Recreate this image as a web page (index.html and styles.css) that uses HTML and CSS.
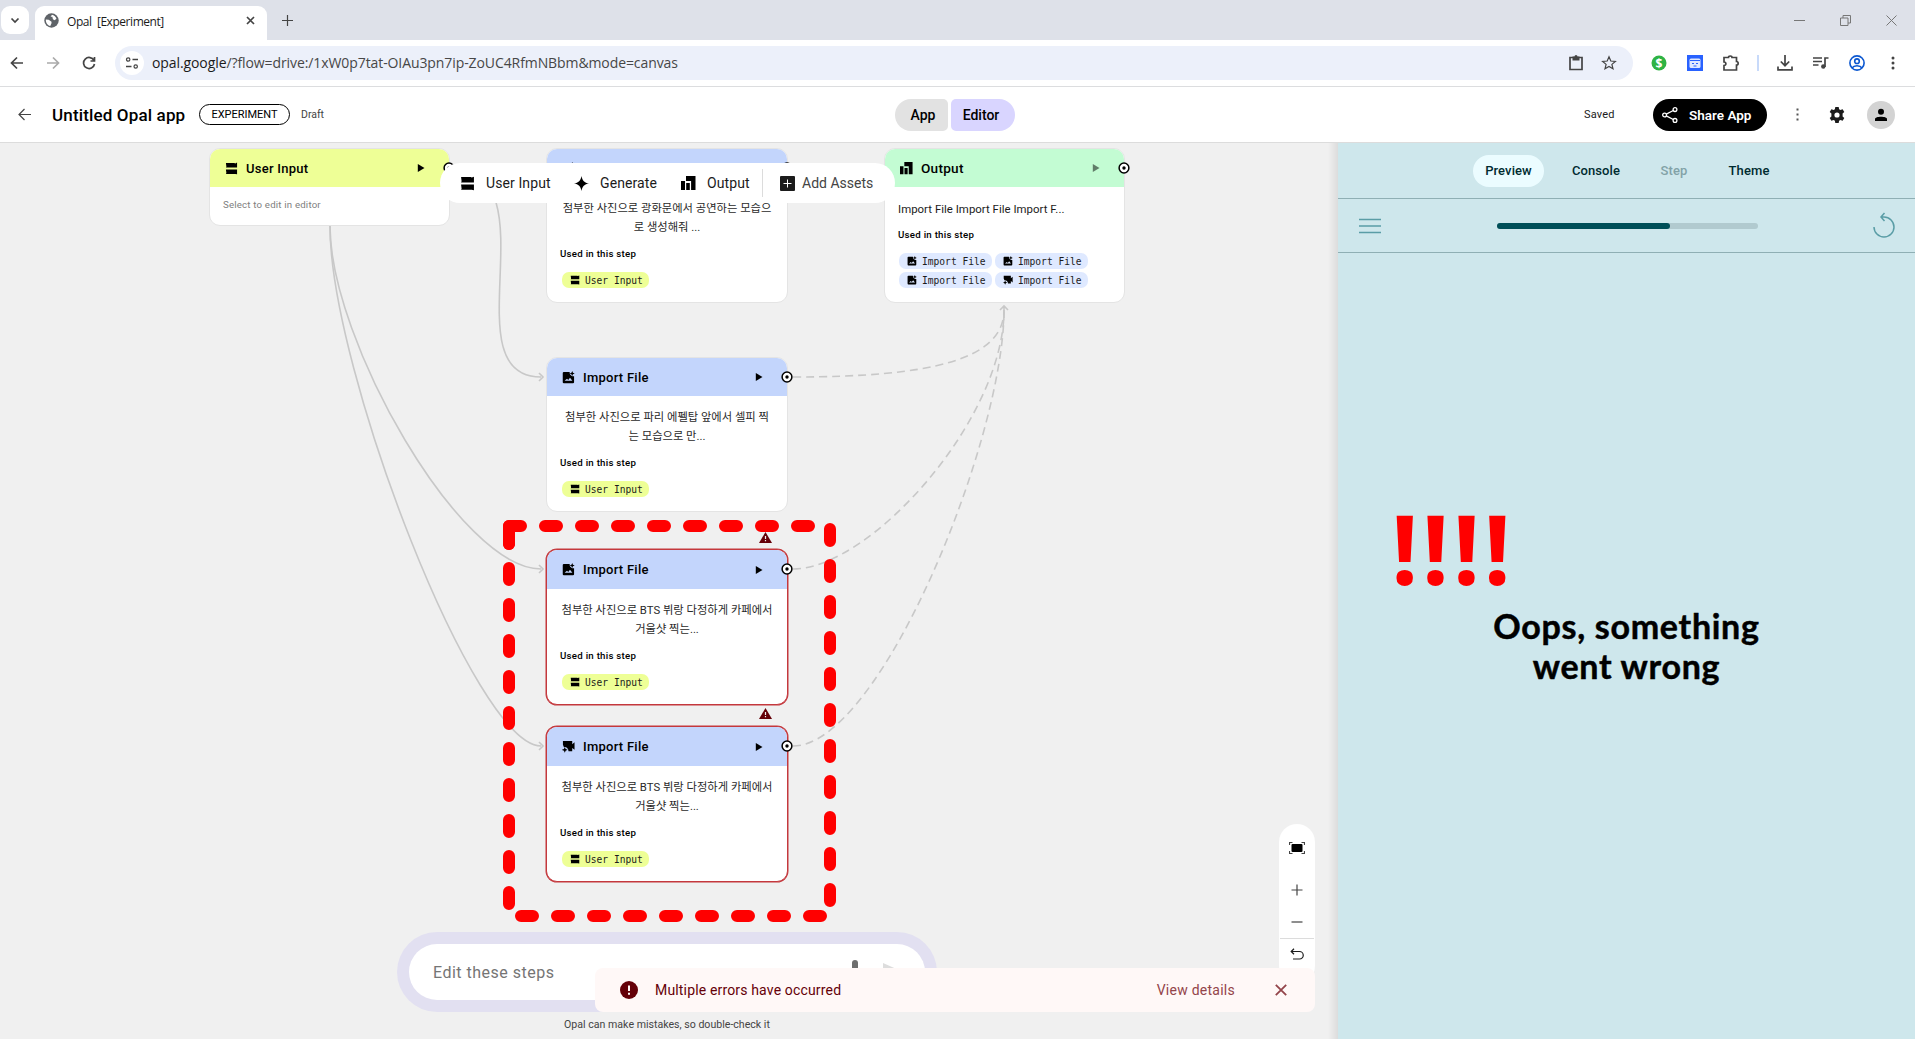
FILE: index.html
```html
<!DOCTYPE html>
<html lang="ko">

<head>
    <meta charset="utf-8">
    <title>Opal [Experiment]</title>
    <link rel="stylesheet" href="styles.css">
</head>

<body>
    <svg class="defs">
        <symbol id="i-input" viewBox="0 0 14 14"><path d="M1 1h9l1 .5 2-.9V6H1l.5-1zM1 8h12v5.3l-2-.5H1l.5-1z" /></symbol>
        <symbol id="i-output" viewBox="0 0 15 15"><path d="M0 5h4v9H0zM5.2 7h3.6v7H5.2zM5 0h9.5v14h-4.4V5H5z" /></symbol>
        <symbol id="i-image" viewBox="0 0 14 14"><path fill-rule="evenodd" d="M2 1h6.3c-.4 2.7 1.9 4.9 4.7 4.6V12a1.2 1.2 0 0 1-1.2 1.2H2A1.2 1.2 0 0 1 .8 12V2.200A1.2 1.2 0 0 1 2 1zm.8 9.600h8.400L8.600 7.400l-1.900 2.400-1.300-1.400z" /><path d="M11 0l.8 1.900 1.900.8-1.900.8-.8 1.900-.8-1.900-1.900-.8 1.900-.8z" /></symbol>
        <symbol id="i-video" viewBox="0 0 14 14"><path d="M1 1h10v3.500l2.500-2v8l-2.500-2V12H7c.1-3-2.500-5-5-4.500L1 5z" /><path d="M3 7.500l.9 2.200 2.200.9-2.200.9L3 13.700l-.9-2.200-2.200-.9 2.200-.9z" /></symbol>
        <symbol id="i-star" viewBox="0 0 16 16"><path d="M8 0c.8 4.800 3.200 7.200 8 8-4.800.8-7.200 3.200-8 8-.8-4.800-3.200-7.200-8-8 4.800-.8 7.200-3.200 8-8z" /></symbol>
        <symbol id="i-play" viewBox="0 0 8 8"><path d="M.8 0L7.500 4 .8 8z" /></symbol>
        <symbol id="i-port" viewBox="0 0 12 12"><circle cx="6" cy="6" r="4.900" fill="#fff" stroke="#000" stroke-width="1.500" /><circle cx="6" cy="6" r="1.700" /></symbol>
        <symbol id="i-warn" viewBox="0 0 13 11"><path d="M6.500 0L13 11H0z" /><path d="M6.500 4v3M6.500 8v1.300" stroke="#f0f0f0" stroke-width="1.200" /></symbol>
    </svg>

    <div class="tabstrip">
        <div class="tab-search"><svg width="10" height="10" viewBox="0 0 10 10"><path class="line thick" d="M1.500 3.500L5 7l3.500-3.500" /></svg></div>
        <div class="tab">
            <svg width="15" height="15" viewBox="0 0 16 16"><circle cx="8" cy="8" r="7.700" fill="#5f6368" /><path fill="#fff" d="M8.500 1.800c2 .5 4 2 4.800 4.200l-2 1.600-1.800-1-.6-2.500H7zM2 7l3 .3 3 2v1.600l-1.300 3C3.800 13.300 1.600 10.500 2 7z" /></svg>
            <span class="tab-name">Opal&nbsp; [Experiment]</span>
            <svg width="9" height="9" viewBox="0 0 9 9"><path class="line thick" d="M1 1l7 7M8 1L1 8" /></svg>
        </div>
        <svg class="new-tab" width="11" height="11" viewBox="0 0 11 11"><path class="line" d="M5.500 0v11M0 5.500h11" /></svg>
        <div class="window-buttons">
            <svg width="11" height="11" viewBox="0 0 11 11"><path class="thin" d="M0 5.500h11" /></svg>
            <svg width="11" height="11" viewBox="0 0 11 11"><path class="thin" d="M.5 3h7.500v7.500H.5zM3 3V.5h7.500V8H8" /></svg>
            <svg width="11" height="11" viewBox="0 0 11 11"><path class="thin" d="M.5.5l10 10M10.500.5l-10 10" /></svg>
        </div>
    </div>

    <div class="addressbar">
        <svg class="nav" width="14" height="14" viewBox="0 0 14 14"><path class="line thick" d="M13 7H2M7 1.500L1.500 7 7 12.500" /></svg>
        <svg class="nav off" width="14" height="14" viewBox="0 0 14 14"><path class="line thick" d="M1 7h11M7 1.500L12.500 7 7 12.500" /></svg>
        <svg class="nav" width="14" height="14" viewBox="0 0 14 14"><path class="line thick" d="M12 4.500A5.500 5.500 0 1 0 12.500 8M12.500 1v4h-4" /></svg>
        <div class="url">
            <div class="site-info"><svg width="14" height="14" viewBox="0 0 14 14"><path class="line thick" d="M7.500 3.500H13M1 10.500h5.500" /><circle class="line" cx="3.200" cy="3.500" r="1.700" /><circle class="line" cx="10.700" cy="10.500" r="1.700" /></svg></div>
            <span class="url-text"><b>opal.google</b>/?flow=drive:/1xW0p7tat-OIAu3pn7ip-ZoUC4RfmNBbm&amp;mode=canvas</span>
            <svg width="14" height="16" viewBox="0 0 14 16"><path class="line thick" d="M1 2.500h12v12H1z" /><path fill="#444" d="M3.500 1.500H5.500a1.500 1.500 0 0 1 3 0h2V5.500h-7z" /></svg>
            <svg width="16" height="16" viewBox="0 0 16 16"><path class="line" d="M8 1.800l1.800 4.200 4.600.4-3.500 3 1.100 4.400L8 11.400l-4 2.400 1.100-4.400-3.500-3 4.600-.4z" /></svg>
        </div>
        <div class="extensions">
            <svg width="16" height="16" viewBox="0 0 16 16"><circle cx="8" cy="8" r="7.500" fill="#2fb344" /><text class="dollar" x="8" y="12.500">$</text></svg>
            <svg width="16" height="16" viewBox="0 0 16 16"><path fill="#2962ff" d="M0 0h16v16H0z" /><rect x="2.500" y="3.500" width="11" height="9.500" rx="1.500" fill="#dfe8ff" /><path stroke="#2962ff" fill="none" d="M3 5.500h10M5 8.500h2M9 8.500h2M6.500 11h3" /></svg>
            <svg width="17" height="16" viewBox="0 0 17 16"><path class="line thick" d="M1 2.500h4.500c0-2 3.500-2 3.500 0h4.500v4c2.200 0 2.200 3.500 0 3.500v5H1v-4.500c2.500 0 2.500-3.500 0-3.500z" /></svg>
            <i></i>
            <svg width="16" height="16" viewBox="0 0 16 16"><path class="line thick" d="M8 0v10.500M3.800 6.500L8 10.700l4.200-4.200M1 11.500v3.300h14v-3.300" /></svg>
            <svg width="16" height="14" viewBox="0 0 16 14"><path class="line thick" d="M0 2h9M0 5.500h9M0 9h5.500M12 11V2h3.500" /><circle cx="10.300" cy="10.500" r="2.200" fill="#444" /></svg>
            <svg width="16" height="16" viewBox="0 0 16 16"><g fill="none" stroke="#0b57d0" stroke-width="1.600"><circle cx="8" cy="8" r="7.100" /><circle cx="8" cy="6.200" r="2.300" /><path d="M3 13c2-3 8-3 10 0" /></g></svg>
            <svg class="menu" width="4" height="14" viewBox="0 0 4 14"><g fill="#444"><circle cx="2" cy="2" r="1.500" /><circle cx="2" cy="7" r="1.500" /><circle cx="2" cy="12" r="1.500" /></g></svg>
        </div>
    </div>

    <header class="app-header">
        <svg width="13" height="13" viewBox="0 0 13 13"><path class="line" d="M13 6.500H1M6.500 1L1 6.500 6.500 12" /></svg>
        <h1>Untitled Opal app</h1>
        <span class="badge">EXPERIMENT</span>
        <span class="draft">Draft</span>
        <nav class="mode">
            <span class="mode-app">App</span>
            <span class="mode-editor">Editor</span>
        </nav>
        <div class="header-right">
            <span class="saved">Saved</span>
            <span class="share"><svg width="16" height="16" viewBox="0 0 16 16"><g fill="none" stroke="#fff" stroke-width="1.300"><circle cx="13" cy="2.600" r="1.900" /><circle cx="2.600" cy="8" r="1.900" /><circle cx="13" cy="13.400" r="1.900" /><path d="M4.300 7.100l7-3.600M4.300 8.900l7 3.600" /></g></svg>Share App</span>
            <svg class="more" width="3" height="13" viewBox="0 0 3 13"><path fill="#555" d="M.5.5h2v2h-2zM.5 5.500h2v2h-2zM.5 10.500h2v2h-2z" /></svg>
            <svg class="gear" width="16" height="16" viewBox="0 0 16 16"><path fill="#1b1b1b" fill-rule="evenodd" d="M6.300 0h3.400l.4 2.200 1.300.8 2.200-.8 1.700 2.900-1.700 1.500v2.800l1.700 1.500-1.700 2.900-2.200-.8-1.300.8-.4 2.200H6.300l-.4-2.200-1.300-.8-2.200.8-1.700-2.900 1.700-1.500V6.600L.7 5.100l1.700-2.900 2.200.8 1.300-.8zM8 5.400a2.600 2.600 0 1 0 0 5.200 2.600 2.600 0 0 0 0-5.200z" /></svg>
            <span class="avatar"><svg width="14" height="14" viewBox="0 0 14 14"><circle cx="7" cy="3.800" r="3" /><path d="M1 13v-2c0-3 12-3 12 0v2z" /></svg></span>
        </div>
    </header>

    <main class="workspace">
        <section class="canvas">
            <svg class="edges" width="1338" height="896" viewBox="0 143 1338 896">
                <path d="M330 226C330 340 460 569 541 569" />
                <path d="M330 226C330 370 475 746 541 746" />
                <path d="M449 168C556 168 448 377 541 377" />
                <path d="M539 373l4 4-4 4M539 565l4 4-4 4M539 742l4 4-4 4" />
                <path class="dashed" d="M793 377C930 377 1004 360 1004 310" />
                <path class="dashed" d="M793 569C870 569 1004 420 1004 310" />
                <path class="dashed" d="M793 746C880 746 1004 440 1004 310" />
                <path d="M1004 318v-12M1000 310l4-4 4 4" />
            </svg>

            <article class="card input-card n-input">
                <div class="card-head yellow"><svg><use href="#i-input" /></svg>User Input<svg class="play"><use href="#i-play" /></svg></div>
                <p class="hint">Select to edit in editor</p>
                <svg class="port"><use href="#i-port" /></svg>
            </article>

            <article class="card n-first">
                <div class="card-head blue"><svg><use href="#i-image" /></svg>Import File<svg class="play"><use href="#i-play" /></svg></div>
                <p class="prompt">첨부한 사진으로 광화문에서 공연하는 모습으<br>로 생성해줘 ...</p>
                <h2>Used in this step</h2>
                <div class="chips"><span class="chip"><svg><use href="#i-input" /></svg>User Input</span></div>
                <svg class="port"><use href="#i-port" /></svg>
            </article>

            <article class="card n-paris">
                <div class="card-head blue"><svg><use href="#i-image" /></svg>Import File<svg class="play"><use href="#i-play" /></svg></div>
                <p class="prompt">첨부한 사진으로 파리 에펠탑 앞에서 셀피 찍<br>는 모습으로 만...</p>
                <h2>Used in this step</h2>
                <div class="chips"><span class="chip"><svg><use href="#i-input" /></svg>User Input</span></div>
                <svg class="port"><use href="#i-port" /></svg>
            </article>

            <article class="card error n-bts1">
                <svg class="warn"><use href="#i-warn" /></svg>
                <div class="card-head blue"><svg><use href="#i-image" /></svg>Import File<svg class="play"><use href="#i-play" /></svg></div>
                <p class="prompt">첨부한 사진으로 BTS 뷔랑 다정하게 카페에서<br>거울샷 찍는...</p>
                <h2>Used in this step</h2>
                <div class="chips"><span class="chip"><svg><use href="#i-input" /></svg>User Input</span></div>
                <svg class="port"><use href="#i-port" /></svg>
            </article>

            <article class="card error n-bts2">
                <svg class="warn"><use href="#i-warn" /></svg>
                <div class="card-head blue"><svg><use href="#i-video" /></svg>Import File<svg class="play"><use href="#i-play" /></svg></div>
                <p class="prompt">첨부한 사진으로 BTS 뷔랑 다정하게 카페에서<br>거울샷 찍는...</p>
                <h2>Used in this step</h2>
                <div class="chips"><span class="chip"><svg><use href="#i-input" /></svg>User Input</span></div>
                <svg class="port"><use href="#i-port" /></svg>
            </article>

            <article class="card n-output">
                <div class="card-head green"><svg><use href="#i-output" /></svg>Output<svg class="play dim"><use href="#i-play" /></svg></div>
                <p class="summary">Import File Import File Import F...</p>
                <h2>Used in this step</h2>
                <div class="chips">
                    <span class="chip file"><svg><use href="#i-image" /></svg>Import File</span>
                    <span class="chip file"><svg><use href="#i-image" /></svg>Import File</span>
                    <span class="chip file"><svg><use href="#i-image" /></svg>Import File</span>
                    <span class="chip file"><svg><use href="#i-video" /></svg>Import File</span>
                </div>
                <svg class="port"><use href="#i-port" /></svg>
            </article>

            <div class="toolbar">
                <span class="tool t-input"><svg><use href="#i-input" /></svg>User Input</span>
                <span class="tool t-generate"><svg><use href="#i-star" /></svg>Generate</span>
                <span class="tool t-output"><svg><use href="#i-output" /></svg>Output</span>
                <span class="tool t-assets"><svg viewBox="0 0 15 15"><rect width="15" height="15" rx="1" fill="#1b1b1b" /><path d="M7.500 3.500v8M3.500 7.500h8" stroke="#fff" /></svg>Add Assets</span>
            </div>

            <!-- marker around the failing steps -->
            <svg class="marker" width="334" height="402" viewBox="503 520 334 402">
                <path d="M509 526H810" />
                <path d="M509 532V905" />
                <path d="M509 526v18" class="solid" />
                <path d="M830 529V902" />
                <path d="M521 916H822" />
            </svg>

            <div class="edit-box">
                <div class="edit-input">
                    Edit these steps
                    <svg width="60" height="30" viewBox="0 0 60 30"><rect x="11" y="3" width="6" height="16" rx="3" fill="#6e6e6e" /><path fill="#ddd" d="M42 6l18 8-18 8z" /></svg>
                </div>
            </div>
            <p class="disclaimer">Opal can make mistakes, so double-check it</p>

            <div class="zoom-tools">
                <svg width="16" height="12" viewBox="0 0 16 12"><rect x="2.500" y="2" width="11" height="8" rx="1" /><path class="line" d="M.5 3V.5H3.500M12.500.5h3V3M.5 9v2.500h3M12.500 11.500h3V9" /></svg>
                <svg width="12" height="12" viewBox="0 0 12 12"><path class="line" d="M6 .5v11M.5 6h11" /></svg>
                <svg width="12" height="12" viewBox="0 0 12 12"><path class="line" d="M.5 6h11" /></svg>
                <svg width="14" height="12" viewBox="0 0 14 12"><path class="line dark" d="M4 .8L1.200 3.500 4 6.200M1.200 3.500H9.500a3.600 3.600 0 0 1 0 7.500H3" /></svg>
            </div>

            <div class="toast">
                <svg width="18" height="18" viewBox="0 0 18 18"><circle cx="9" cy="9" r="9" fill="#650008" /><path stroke="#fff8f7" stroke-width="2" d="M9 4.500v5.500M9 11.700v2" /></svg>
                <span class="toast-text">Multiple errors have occurred</span>
                <span class="toast-link">View details</span>
                <svg width="12" height="12" viewBox="0 0 12 12"><path stroke="#93444a" stroke-width="1.800" d="M.8.8l10.400 10.400M11.200.8L.8 11.200" /></svg>
            </div>
        </section>

        <aside class="preview">
            <nav class="preview-tabs">
                <span class="active">Preview</span>
                <span>Console</span>
                <span class="disabled">Step</span>
                <span class="theme">Theme</span>
            </nav>
            <div class="preview-bar">
                <svg width="22" height="16" viewBox="0 0 22 16"><path class="teal" d="M0 1.500h22M0 8h22M0 14.500h22" /></svg>
                <div class="progress"><div></div></div>
                <svg width="22" height="28" viewBox="0 0 22 28"><path class="teal" d="M1 15a10 10 0 1 0 10-10H8M11.500 1L8 5l3.500 4" /></svg>
            </div>
            <div class="preview-body">
                <div class="bangs">!!!!</div>
                <div class="oops">Oops, something<br>went wrong</div>
            </div>
        </aside>
    </main>
</body>

</html>
```
FILE: styles.css
```css
* {
    box-sizing: border-box;
}

body {
    margin: 0;
    width: 1915px;
    height: 1039px;
    overflow: hidden;
    background-color: #fff;
    color: #1b1b1b;
    font-family: Roboto, "Noto Sans CJK KR", sans-serif;
}

h1, h2, p {
    margin: 0;
}

svg {
    display: block;
    flex: none;
}

.defs {
    display: none;
}

.line {
    fill: none;
    stroke: #444;
    stroke-width: 1.2;
}

.thick {
    stroke-width: 1.7;
}

.dark {
    stroke: #1b1b1b;
}

.thin {
    fill: none;
    stroke: #777;
    stroke-width: 1;
}

/* browser window */

.tabstrip {
    display: flex;
    align-items: center;
    height: 40px;
    background-color: #dee1e9;
}

.tab-search {
    display: flex;
    align-items: center;
    justify-content: center;
    width: 28px;
    height: 28px;
    margin-left: 1px;
    border-radius: 9px;
    background-color: #fff;
}

.tab {
    display: flex;
    align-items: center;
    align-self: flex-end;
    width: 232px;
    height: 34px;
    margin-left: 6px;
    padding: 0 12px 5px 9px;
    border-radius: 9px 9px 0 0;
    background-color: #fff;
}

.tab-name {
    flex: 1;
    margin-left: 8px;
    padding-top: 1px;
    font: 12px "Open Sans", sans-serif;
    letter-spacing: -0.45px;
}

.new-tab {
    margin-left: 15px;
}

.window-buttons {
    display: flex;
    gap: 35px;
    margin-left: auto;
    margin-right: 18px;
}

.addressbar {
    display: flex;
    align-items: center;
    height: 47px;
    padding: 0 13px 0 10px;
    border-bottom: 1px solid #dcdddf;
}

.nav {
    margin-right: 22px;
}

.nav.off {
    opacity: 0.45;
}

.url {
    display: flex;
    flex: none;
    align-items: center;
    gap: 18px;
    width: 1518px;
    height: 34px;
    margin-left: -3px;
    padding: 0 16px 0 5px;
    border-radius: 17px;
    background-color: #ecf0fa;
}

.site-info {
    display: flex;
    align-items: center;
    justify-content: center;
    width: 24px;
    height: 24px;
    border-radius: 50%;
    background-color: #fff;
}

.url-text {
    flex: 1;
    margin-left: -10px;
    padding-bottom: 1px;
    font: 14px "Open Sans", sans-serif;
    letter-spacing: -0.09px;
    color: #474747;
    white-space: nowrap;
}

.url-text b {
    font-weight: 400;
    color: #1b1b1b;
}

.extensions {
    display: flex;
    align-items: center;
    gap: 20px;
    margin-left: 18px;
}

.extensions i {
    width: 2px;
    height: 16px;
    margin: 0 -2px 0 -3px;
    background-color: #c8dafa;
}

.menu {
    margin-left: 6px;
}

.dollar {
    font: bold 12px "Open Sans", sans-serif;
    fill: #fff;
    text-anchor: middle;
}

/* app header */

.app-header {
    display: flex;
    align-items: center;
    height: 56px;
    padding: 0 20px 0 18px;
    border-bottom: 1px solid #dcdcdc;
}

.app-header h1 {
    width: 147px;
    margin-left: 21px;
    font-size: 17px;
    font-weight: 500;
    letter-spacing: 0.15px;
    color: #000;
    white-space: nowrap;
}

.badge {
    width: 91px;
    height: 21px;
    border: 1.5px solid #000;
    border-radius: 11px;
    font-size: 11px;
    line-height: 20px;
    text-align: center;
    color: #000;
}

.draft {
    width: 25px;
    margin-left: 11px;
    font-size: 10.5px;
    color: #444;
}

.mode {
    display: flex;
    gap: 3px;
    margin-left: 569px;
    font-size: 14px;
    font-weight: 500;
    line-height: 32px;
    text-align: center;
    color: #000;
}

.mode-app {
    width: 53px;
    padding-left: 3px;
    border-radius: 16px 5px 5px 16px;
    background-color: #e2e2e2;
}

.mode-editor {
    width: 64px;
    padding-right: 4px;
    border-radius: 5px 16px 16px 5px;
    background-color: #d9d5ff;
}

.header-right {
    display: flex;
    align-items: center;
    margin-left: auto;
}

.saved {
    width: 69px;
    font-size: 11px;
    letter-spacing: 0.2px;
}

.share {
    display: flex;
    align-items: center;
    gap: 11px;
    width: 114px;
    height: 32px;
    padding-left: 9px;
    border-radius: 16px;
    background-color: #000;
    font-size: 13.5px;
    font-weight: 600;
    color: #fff;
}

.more {
    margin-left: 29px;
}

.gear {
    margin-left: 30px;
}

.avatar {
    display: flex;
    align-items: center;
    justify-content: center;
    width: 28px;
    height: 28px;
    margin-left: 22px;
    border-radius: 50%;
    background-color: #d3d3d3;
}

.workspace {
    display: flex;
    height: 896px;
}

/* step canvas: nodes are placed freely */

.canvas {
    position: relative;
    flex: none;
    width: 1338px;
    overflow: hidden;
    background: linear-gradient(to right, transparent 1328px, #dcdcdc 1338px) #f0f0f0;
}

.edges {
    position: absolute;
    top: 0;
    left: 0;
    fill: none;
    stroke: #c8c8c8;
    stroke-width: 1.6;
}

.dashed {
    stroke-dasharray: 8 5;
}

.card {
    position: absolute;
    width: 242px;
    height: 155px;
    border: 1px solid #e4e4e4;
    border-radius: 11px;
    background-color: #fff;
}

.card.error {
    height: 156px;
    border-color: #c4383d;
    box-shadow: 0 0 0 0.5px #c4383d;
}

.card.input-card {
    width: 241px;
    height: 78px;
}

.n-input {
    left: 209px;
    top: 5px;
}

.n-first {
    left: 546px;
    top: 5px;
}

.n-paris {
    left: 546px;
    top: 214px;
}

.n-bts1 {
    left: 546px;
    top: 406px;
}

.n-bts2 {
    left: 546px;
    top: 583px;
}

.n-output {
    left: 884px;
    top: 5px;
}

.card.n-output {
    width: 241px;
}

.card-head {
    display: flex;
    align-items: center;
    height: 38px;
    padding: 0 24px 0 15px;
    border-radius: 10px 10px 0 0;
    font-size: 13px;
    font-weight: 500;
    letter-spacing: 0.25px;
    color: #000;
}

.error .card-head {
    height: 39px;
}

.card-head svg {
    width: 13px;
    height: 13px;
    margin-right: 8px;
}

.card-head .play {
    width: 8px;
    height: 8px;
    margin: 0 0 0 auto;
}

.card-head .dim {
    opacity: 0.5;
}

.yellow {
    background-color: #eeff96;
}

.blue {
    background-color: #c3d5fc;
}

.green {
    font-size: 13.6px;
    background-color: #c3fcd3;
}

.hint {
    padding: 12px 13px;
    font-size: 9.7px;
    letter-spacing: 0.18px;
    color: #808080;
}

.prompt {
    padding-top: 12px;
    font-size: 11.3px;
    line-height: 19px;
    text-align: center;
    color: #2a2a2a;
    white-space: nowrap;
}

.summary {
    padding: 12px 13px 0;
    font-size: 11.4px;
    line-height: 20px;
    letter-spacing: 0.03px;
}

.card h2 {
    padding: 8px 13px 0;
    font-size: 9.7px;
    font-weight: 500;
    line-height: 18px;
    letter-spacing: 0.25px;
    color: #000;
}

.n-output h2 {
    line-height: 16px;
}

.chips {
    display: flex;
    flex-wrap: wrap;
    gap: 3px;
    padding: 9px 14px 0 15px;
}

.n-output .chips {
    padding: 10px 14px 0;
}

.chip {
    display: flex;
    align-items: center;
    gap: 5px;
    width: 87px;
    height: 16px;
    padding-left: 8px;
    border-radius: 7px;
    background-color: #eeff96;
    font: 9.6px "DejaVu Sans Mono", monospace;
    color: #1b1b1b;
    white-space: nowrap;
}

.chip.file {
    width: 93px;
    background-color: #dfe9ff;
}

.chip svg {
    width: 10px;
    height: 10px;
}

.port {
    position: absolute;
    right: -6px;
    top: 13px;
    width: 12px;
    height: 12px;
}

.warn {
    position: absolute;
    right: 15px;
    top: -18px;
    width: 13px;
    height: 11px;
    fill: #650008;
}

.n-bts2 .warn {
    top: -19px;
}

.toolbar {
    position: absolute;
    left: 440px;
    top: 20px;
    display: flex;
    align-items: center;
    width: 455px;
    height: 40px;
    padding-left: 20px;
    border-radius: 20px;
    background-color: #fff;
    font-size: 14px;
    letter-spacing: 0.1px;
}

.tool {
    display: flex;
    align-items: center;
    gap: 11px;
    white-space: nowrap;
}

.tool svg {
    width: 15px;
    height: 15px;
}

.t-input {
    width: 114px;
}

.t-generate {
    width: 107px;
}

.t-output {
    width: 81px;
}

.t-assets {
    gap: 7px;
    height: 28px;
    padding-left: 17px;
    border-left: 1px solid #dcdcdc;
    letter-spacing: 0;
    color: #444;
}

.marker {
    position: absolute;
    left: 503px;
    top: 377px;
    fill: none;
    stroke: #f00;
    stroke-width: 12;
    stroke-linecap: round;
    stroke-dasharray: 12 24;
}

.marker .solid {
    stroke-dasharray: none;
}

.edit-box {
    position: absolute;
    left: 397px;
    top: 789px;
    width: 540px;
    height: 80px;
    padding: 12px;
    border-radius: 40px;
    background-color: #e2e0f1;
}

.edit-input {
    display: flex;
    align-items: center;
    justify-content: space-between;
    height: 56px;
    padding: 0 24px;
    border-radius: 28px;
    background-color: #fff;
    font-size: 16px;
    letter-spacing: 0.5px;
    color: #757575;
}

.disclaimer {
    position: absolute;
    left: 397px;
    top: 875px;
    width: 540px;
    font-size: 10.6px;
    line-height: 14px;
    text-align: center;
    color: #444;
}

.zoom-tools {
    position: absolute;
    left: 1279px;
    top: 681px;
    display: flex;
    flex-direction: column;
    align-items: center;
    width: 36px;
    height: 160px;
    padding-top: 18px;
    border-radius: 18px;
    background: linear-gradient(#dcdcdc, #dcdcdc) 1px 114px / 34px 1px no-repeat #fff;
}

.zoom-tools svg:nth-child(2) {
    margin-top: 30px;
}

.zoom-tools svg:nth-child(n+3) {
    margin-top: 20px;
}

.toast {
    position: absolute;
    left: 595px;
    top: 825px;
    display: flex;
    align-items: center;
    width: 720px;
    height: 44px;
    padding: 0 28px 0 25px;
    border-radius: 8px;
    background-color: #fff8f7;
    font-size: 14px;
    color: #650008;
}

.toast-text {
    margin-left: 17px;
    letter-spacing: 0.16px;
}

.toast-link {
    margin-left: auto;
    margin-right: 40px;
    letter-spacing: 0.25px;
    color: #93444a;
}

/* preview pane */

.preview {
    display: flex;
    flex: 1;
    flex-direction: column;
    background-color: #cee7ec;
}

.preview-tabs {
    display: flex;
    align-items: center;
    height: 56px;
    padding-left: 135px;
    border-bottom: 1px solid #8fafb4;
    font-size: 13px;
    font-weight: 500;
    line-height: 32px;
    text-align: center;
    letter-spacing: 0.1px;
    color: #002b30;
}

.preview-tabs span {
    width: 80px;
}

.preview-tabs .active {
    width: 71px;
    margin-right: 12px;
    border-radius: 16px;
    background-color: #ebfcff;
}

.preview-tabs .disabled {
    width: 76px;
    color: #82a2a7;
}

.preview-tabs .theme {
    width: 74px;
}

.preview-bar {
    display: flex;
    align-items: center;
    justify-content: space-between;
    height: 54px;
    padding: 0 20px 0 21px;
    border-bottom: 1px solid #8fafb4;
}

.teal {
    fill: none;
    stroke: #5a9da6;
    stroke-width: 1.5;
}

.progress {
    width: 261px;
    height: 6px;
    border-radius: 3px;
    background-color: #b1cacf;
}

.progress div {
    width: 173px;
    height: 6px;
    border-radius: 3px;
    background-color: #004f58;
}

.preview-body {
    flex: 1;
    padding-top: 240px;
}

.bangs {
    height: 112px;
    margin-left: 53px;
    font: bold 96px/110px "Open Sans", sans-serif;
    letter-spacing: 3.4px;
    color: #f00;
}

.oops {
    margin-top: 1px;
    font-family: Lato, sans-serif;
    font-size: 34px;
    font-weight: 700;
    line-height: 40px;
    letter-spacing: 0.7px;
    text-align: center;
    color: #000;
    -webkit-text-stroke: 0.5px #000;
}
```
